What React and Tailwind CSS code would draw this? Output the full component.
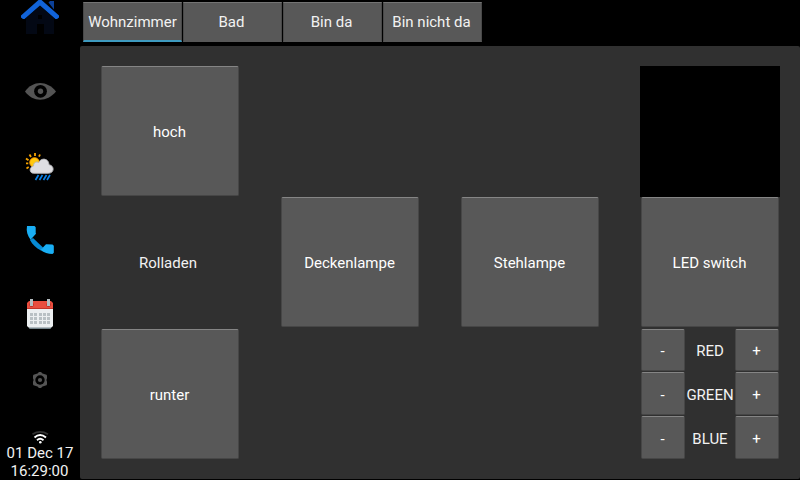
import React from 'react';

const keyStyle =
  'flex items-center justify-center rounded-[2px] border border-[#464646] border-t-[#858585] bg-[#585858] pr-px text-white';

function Key({ label, className = 'pt-[2px]' }) {
  return <button className={`${keyStyle} ${className}`}>{label}</button>;
}

function HomeIcon() {
  return (
    <svg className="h-[54px] w-20 shrink-0" viewBox="0 0 80 54">
      <path d="M26 18 40 6l14 12V34H44V24H37v10H26z" fill="#030814" />
      <path d="M38 15h4v4h-4z" fill="#000" />
      <path d="M48.500 2.500 50 1h4v8.500z" fill="#0b4098" />
      <path d="M21 15.500 38.500 0h3L59 15.500v2L57 19h-1.500L40 5.500 24.500 19H23l-2-1.500z" fill="#1163d8" />
    </svg>
  );
}

function EyeIcon() {
  return (
    <svg className="h-[75px] w-20 shrink-0" viewBox="0 54 80 75">
      <path d="M25 91.500C33 80 47 80 56 91.500 47 102.500 33 102.500 25 91.500z" fill="#545454" />
      <circle cx="40.500" cy="91.300" r="6.400" fill="#000" />
      <circle cx="40.500" cy="91.300" r="2.700" fill="#545454" />
    </svg>
  );
}

function WeatherIcon() {
  return (
    <svg className="h-[74px] w-20 shrink-0" viewBox="0 129 80 74">
      <path
        d="M35 153v3M29.500 154.500l1.500 2.500M40 154.500l-1 2.200M26 158.500l2.500 1.800M26 163.300h2.300M26.500 168.500l2.200-1.500"
        stroke="#f5a300"
        strokeWidth="1.800"
      />
      <circle cx="34.500" cy="162.500" r="4.800" fill="#ffc90e" stroke="#ff9900" strokeWidth="0.900" />
      <path
        d="M33.500 173.300c-4.500-.300-4.500-6.300 0-7.300 0-3.700 3-4.800 5.300-3.500 2.500-5.500 10.200-4 10.200 2.300 5.500.700 5.700 8.200-.500 8.500z"
        fill="#dedee2"
        stroke="#b4b4b8"
        strokeWidth="0.900"
      />
      <path d="m38.500 175-3 5m7-5-3 5m7-5-3 5m6.500-5-3 5" stroke="#0880e8" strokeWidth="1.700" />
    </svg>
  );
}

function PhoneIcon() {
  return (
    <svg className="h-[74px] w-20 shrink-0" viewBox="0 203 80 74">
      <path d="m30 240 3-2 10 9.500-2 3c-5-2.500-8.500-6-11-10.500z" fill="#078bd5" />
      <path d="M27 226h7.500l1.200 1.200v5.600l.3 1-5.500 6C27.500 235.500 26 231 27 226z" fill="#19aef4" />
      <path d="m40.500 250 5.500-5.800 6.500.3 1.300 1.300v7l-1.300 1.200c-4.500 0-8.500-1.200-12-4z" fill="#19aef4" />
    </svg>
  );
}

function CalendarIcon() {
  return (
    <svg className="h-[74px] w-20 shrink-0" viewBox="0 277 80 74">
      <rect x="29" y="325" width="22" height="4" rx="1" fill="#74838a" />
      <path d="M27 308h26v18l-1.500 1.500h-23L27 326z" fill="#eceff1" />
      <path d="M27 309v-6l2-2h22l2 2v6z" fill="#e94e3f" />
      <path d="M27 308.500h26" stroke="#c33328" strokeWidth="1" />
      <circle cx="31.500" cy="304.800" r="2.300" fill="#ba3026" />
      <circle cx="48.500" cy="304.800" r="2.300" fill="#ba3026" />
      <path d="M31.500 299v7m17-7v7" stroke="#b5bec2" strokeWidth="3" />
      <path
        d="M30 314.500h3m1 0h3m2 0h3m1 0h3m1 0h3M30 318.500h3m1 0h3m2 0h3m1 0h3m1 0h3M30 322.500h3m1 0h3m2 0h3m1 0h3m1 0h3"
        stroke="#b9c0c4"
        strokeWidth="3"
      />
    </svg>
  );
}

function GearIcon() {
  return (
    <svg className="h-[59px] w-20 shrink-0" viewBox="0 351 80 59">
      <path
        d="M39 372h2l1.500 1.500 4 1.300.500 1v2.500l-.6 1.700.6 1.700v2.500l-.5 1-4 1.300L41 388h-2l-1.500-1.500-4-1.300-.5-1v-2.500l.6-1.700-.6-1.700v-2.500l.5-1 4-1.300z"
        fill="#555"
      />
      <circle cx="40" cy="380" r="4.700" fill="#000" />
      <circle cx="40" cy="380" r="2.100" fill="#555" />
    </svg>
  );
}

function WifiIcon() {
  return (
    <svg className="h-[34px] w-20 shrink-0" viewBox="0 410 80 34">
      <path d="M32.500 434.200q7.500-4.500 15.500 0" fill="none" stroke="#333" strokeWidth="1.800" />
      <path
        d="M34.500 437.500q5.500-5 11.500 0M37 440.200q3-2.700 6.500 0"
        fill="none"
        stroke="#fff"
        strokeWidth="1.900"
      />
      <circle cx="40.300" cy="442.300" r="1.300" fill="#fff" />
    </svg>
  );
}

function Sidebar() {
  return (
    <aside className="flex w-20 shrink-0 flex-col">
      <HomeIcon />
      <EyeIcon />
      <WeatherIcon />
      <PhoneIcon />
      <CalendarIcon />
      <GearIcon />
      <WifiIcon />
      <div className="text-center leading-[18px] whitespace-nowrap">
        <div>01 Dec 17</div>
        <div className="pr-px">16:29:00</div>
      </div>
    </aside>
  );
}

function Tabs() {
  const tabs = ['Wohnzimmer', 'Bad', 'Bin da', 'Bin nicht da'];
  return (
    <nav className="flex h-[46px] gap-px pt-[2px] pl-[3px]">
      {tabs.map((tab, i) => (
        <button
          key={tab}
          className={`flex h-10 w-[99px] items-center justify-center border border-[#484848] border-t-[#747474] bg-[#585858] whitespace-nowrap ${
            i === 0 ? 'border-b-2 border-b-[#3e9abf] pt-px' : 'border-b-[#585858] pr-[2px]'
          }`}
        >
          {tab}
        </button>
      ))}
    </nav>
  );
}

function ColourRow({ name, className, textOffset }) {
  return (
    <div className={`flex ${className}`}>
      <Key label="-" className={`h-full w-11 ${textOffset}`} />
      <div
        className={`flex h-full w-[50px] items-center justify-center whitespace-nowrap ${textOffset}`}
      >
        {name}
      </div>
      <Key label="+" className={`h-full w-11 ${textOffset}`} />
    </div>
  );
}

export default function App() {
  return (
    <div className="flex h-[480px] w-[800px] overflow-hidden bg-black font-['Roboto',sans-serif] text-[15px] text-[#f2f2f2]">
      <Sidebar />
      <div className="flex w-[720px] flex-col">
        <Tabs />
        <main className="flex h-[433px] gap-10 rounded-[2px] bg-[#303030] px-5 pt-5">
          <section className="flex w-[140px] flex-col items-center">
            <Key label="hoch" className="h-[130px] w-[138px] pt-[2px]" />
            <div className="flex h-[133px] items-center pt-[2px] pr-1">Rolladen</div>
            <Key label="runter" className="h-[130px] w-[138px] pt-[2px]" />
          </section>
          <section className="w-[140px] px-px pt-[131px]">
            <Key label="Deckenlampe" className="h-[130px] w-[138px] pt-[2px]" />
          </section>
          <section className="w-[140px] px-px pt-[131px]">
            <Key label="Stehlampe" className="h-[130px] w-[138px] pt-[2px]" />
          </section>
          <section className="flex w-[140px] flex-col items-center">
            <div className="h-[131px] w-[140px] bg-black" />
            <Key label="LED switch" className="mb-[2px] h-[130px] w-[138px] pt-[2px]" />
            <ColourRow name="RED" className="mb-px h-[42px]" textOffset="pt-[2px]" />
            <ColourRow name="GREEN" className="mb-px h-[43px]" textOffset="pt-[3px]" />
            <ColourRow name="BLUE" className="h-[43px]" textOffset="pt-[3px]" />
          </section>
        </main>
      </div>
    </div>
  );
}
